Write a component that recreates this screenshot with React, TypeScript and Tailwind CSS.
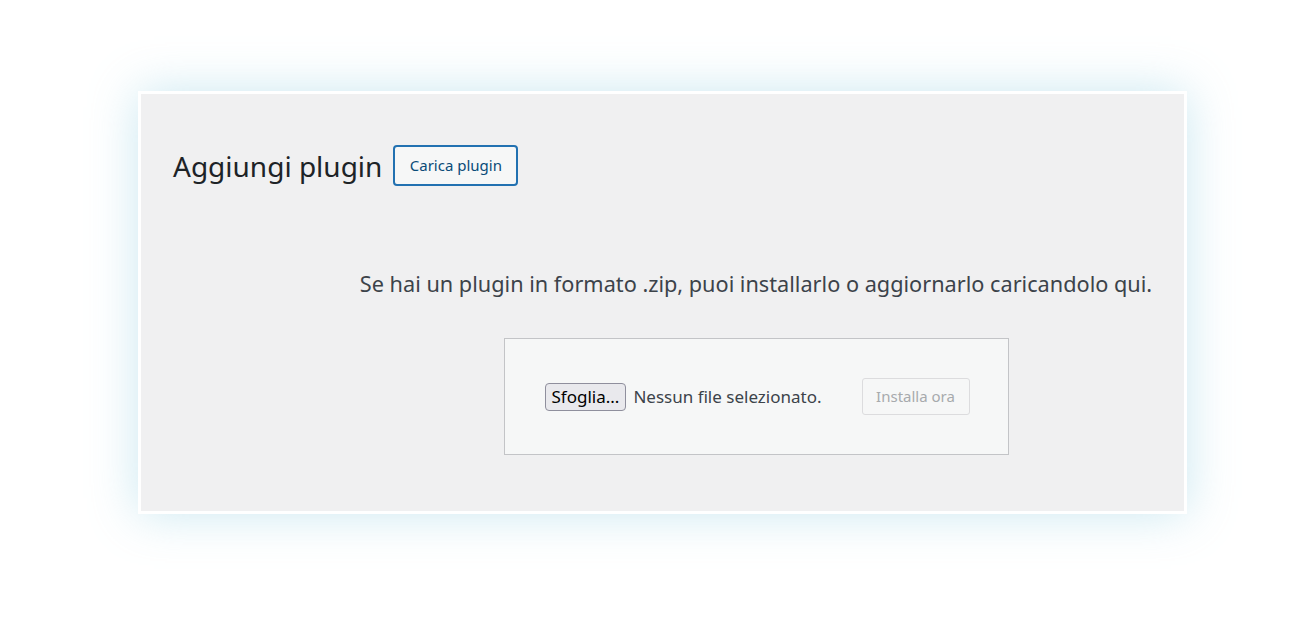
export default function App() {
  return (
    <div className="min-h-[617px] w-[1300px] bg-white pl-[138px] pt-[91px] font-['Noto_Sans',sans-serif]">
      <div className="h-[423px] w-[1049px] border-[3px] border-white bg-[#f0f0f1] shadow-[0_0_45px_rgba(140,205,225,0.45)]">
        <div className="flex items-center pl-[32px] pt-[51px]">
          <h1 className="text-[28px] font-normal leading-none text-[#1d2327]">Aggiungi plugin</h1>
          <button className="ml-[11px] h-[41px] w-[125px] rounded-[4px] border-2 border-[#2271b1] bg-[#f6f7f7] text-[15px] text-[#0a4b78]">
            Carica plugin
          </button>
        </div>

        <div className="flex flex-col items-center pl-[187px]">
          <p className="mt-[84px] text-[21.7px] leading-[28px] text-[#3c434a]">
            Se hai un plugin in formato .zip, puoi installarlo o aggiornarlo caricandolo qui.
          </p>
          <div className="mt-[40px] flex h-[117px] w-[505px] items-center border border-[#c3c4c7] bg-[#f6f7f7] pl-[40px] pr-[38px]">
            <span className="flex h-[28px] items-center rounded-[4px] border border-[#8f8f9d] bg-[#e9e9ed] px-[6px] text-[17px] text-black">
              Sfoglia...
            </span>
            <span className="ml-[7px] text-[17px] text-[#3c434a]">Nessun file selezionato.</span>
            <button
              disabled
              className="ml-auto h-[37px] w-[108px] rounded-[3px] border border-[#dcdcde] bg-[#f6f7f7] text-[15px] text-[#a7aaad]"
            >
              Installa ora
            </button>
          </div>
        </div>
      </div>
    </div>
  );
}
